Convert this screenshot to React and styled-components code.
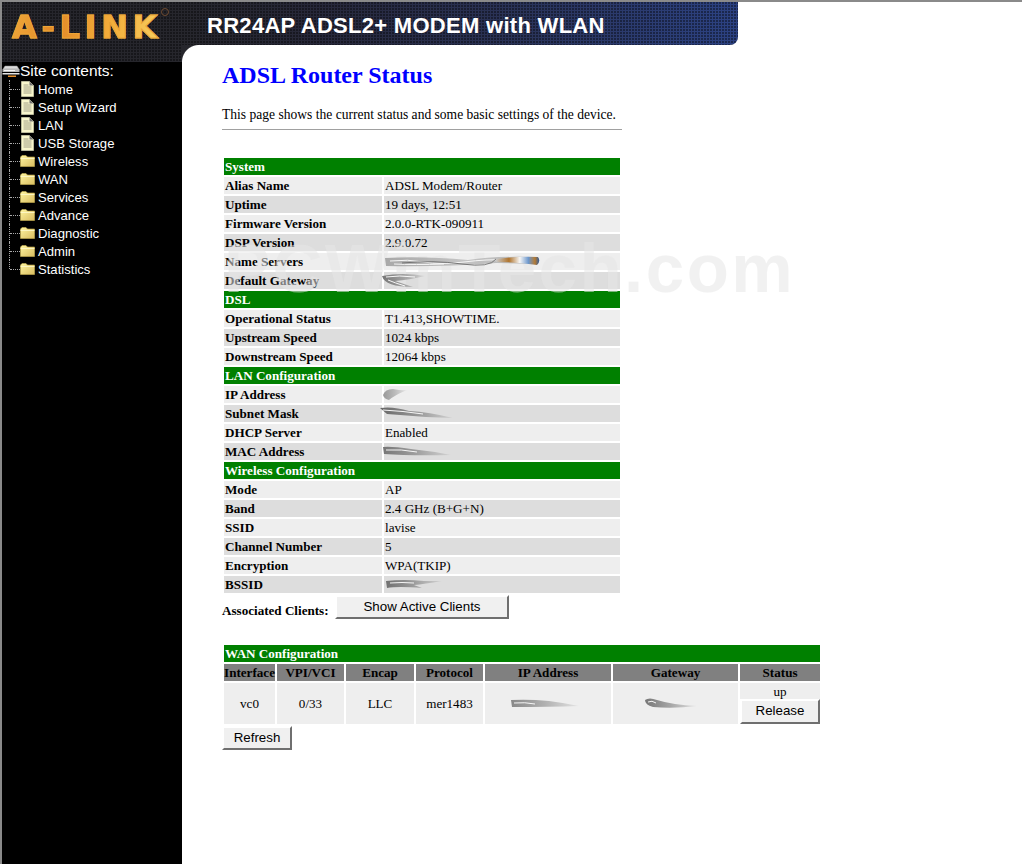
import React, { useId } from "react"
import styled, { createGlobalStyle } from "styled-components"

const GlobalStyle = createGlobalStyle`
  html, body {
    margin: 0;
    padding: 0;
    background: #fff;
  }
  body {
    font-family: "Liberation Serif", "Times New Roman", serif;
    font-size: 13.1px;
    color: #000;
  }
`

const dots = `
  radial-gradient(circle at 1px 1px, rgba(0, 0, 0, 0.4) 0.7px, transparent 1.1px)
`

const Page = styled.div`
  display: grid;
  grid-template-columns: 180px 1fr;
  min-height: 862px;
  border-top: 2px solid #8a8a8a;
  border-left: 2px solid #8a8a8a;
`

const LeftColumn = styled.div`
  display: flex;
  flex-direction: column;
  background: #000;
`

const LogoBlock = styled.div`
  position: relative;
  height: 60px;
  background-color: #26262c;
  background-image: ${dots};
  background-size: 3px 3px;
`

const LogoText = styled.span`
  display: block;
  padding: 5px 0 0 10px;
  font-family: "DejaVu Sans", sans-serif;
  font-weight: 700;
  font-size: 32px;
  line-height: 40px;
  letter-spacing: 4.7px;
  background: linear-gradient(100deg, #f2ae3e 0%, #e28a28 30%, #f3ad3a 60%, #f6cb5c 85%, #eaa638 100%);
  -webkit-background-clip: text;
  background-clip: text;
  color: transparent;
  -webkit-text-stroke: 1px #eca536;
`

const Registered = styled.span`
  position: absolute;
  left: 159px;
  top: 6px;
  width: 6px;
  height: 6px;
  border: 1px solid #6e4a30;
  border-radius: 50%;
`

const RightColumn = styled.div`
  display: flex;
  flex-direction: column;
  align-items: flex-start;
  min-width: 0;
`

const TitleBar = styled.div`
  box-sizing: border-box;
  width: 556px;
  height: 43px;
  padding: 11px 0 0 25px;
  border-bottom-right-radius: 8px;
  background-color: #26262c;
  background-image: ${dots}, linear-gradient(90deg, #26262c 0%, #27283a 25%, #2a3358 60%, #2c4283 100%);
  background-size: 3px 3px, 100% 100%;
  color: #fff;
  font-family: "Liberation Sans", Arial, sans-serif;
  font-weight: 700;
  font-size: 22px;
  line-height: 26px;
  letter-spacing: 0.29px;
  white-space: nowrap;
`

const Main = styled.main`
  position: relative;
  padding: 0 0 0 40px;
  &::before {
    content: "";
    position: absolute;
    left: 0;
    top: 0;
    width: 17px;
    height: 17px;
    background: radial-gradient(circle at 100% 100%, #fff 16.5px, #26262c 17.5px);
  }
`

const Heading = styled.h2`
  margin: 0;
  padding-top: 15px;
  color: #0000ff;
  font-size: 24px;
  line-height: 30px;
  font-weight: 700;
`

const Intro = styled.p`
  margin: 0;
  padding-top: 17px;
  width: 400px;
  font-size: 13.55px;
  line-height: 15px;
  white-space: nowrap;
`

const Rule = styled.hr`
  width: 400px;
  height: 0;
  margin: 7px 0 26px;
  border: 0;
  border-top: 1px solid #a0a0a0;
`

const Table = styled.table`
  border-collapse: separate;
  border-spacing: 2px;
  table-layout: fixed;
  width: ${(p) => p.$width}px;
  font-size: 13.1px;
  line-height: 15px;
`

const SectionCell = styled.td`
  height: 17px;
  padding: 1px;
  box-sizing: border-box;
  background: #008000;
  color: #fff;
  font-weight: 700;
`

const LabelCell = styled.td`
  height: 17px;
  padding: 1px;
  box-sizing: border-box;
  font-weight: 700;
  white-space: nowrap;
  background: ${(p) => (p.$alt ? "#dddddd" : "#eeeeee")};
`

const ValueCell = styled.td`
  position: relative;
  height: 17px;
  padding: 1px;
  box-sizing: border-box;
  white-space: nowrap;
  background: ${(p) => (p.$alt ? "#dddddd" : "#eeeeee")};
`

const HeadCell = styled.td`
  height: 17px;
  padding: 1px 0;
  box-sizing: border-box;
  background: #808080;
  font-weight: 700;
  text-align: center;
  white-space: nowrap;
`

const DataCell = styled.td`
  position: relative;
  height: 41px;
  padding: 0;
  box-sizing: border-box;
  background: #eeeeee;
  text-align: center;
  vertical-align: middle;
`

const StatusText = styled.div`
  height: 16px;
  line-height: 18px;
`

const ClientsRow = styled.div`
  display: flex;
  align-items: flex-end;
  width: 400px;
  margin-bottom: 24px;
`

const ClientsLabel = styled.span`
  width: 113px;
  font-weight: 700;
  line-height: 15px;
  padding-bottom: 1px;
  white-space: nowrap;
`

const Button = styled.button`
  display: block;
  box-sizing: border-box;
  width: ${(p) => p.$width}px;
  height: ${(p) => p.$height || 24}px;
  margin: 0;
  padding: 0 0 2px;
  background: #f0f0f0;
  border: 2px solid;
  border-color: #ffffff #6f6f6f #6f6f6f #ffffff;
  color: #000;
  font-family: "Liberation Sans", Arial, sans-serif;
  font-size: 13.33px;
`

const SmudgeSvg = styled.svg`
  position: absolute;
  z-index: 1;
  left: ${(p) => p.$x}px;
  top: ${(p) => p.$y}px;
  overflow: visible;
  pointer-events: none;
`

const Watermark = styled.div`
  position: absolute;
  left: 42px;
  top: 184px;
  color: rgba(230, 230, 230, 0.55);
  font-family: "Liberation Sans", Arial, sans-serif;
  font-weight: 700;
  font-size: 69px;
  line-height: 80px;
  letter-spacing: 2.5px;
  white-space: nowrap;
  pointer-events: none;
`

const Tree = styled.ul`
  position: relative;
  margin: 0;
  padding: 0;
  list-style: none;
  color: #fff;
  font-family: "Liberation Sans", Arial, sans-serif;
  font-size: 13.1px;
`

const TreeRoot = styled.li`
  display: flex;
  align-items: center;
  gap: 0;
  height: 18px;
  font-size: 15.5px;
`

const TreeItem = styled.li`
  position: relative;
  display: flex;
  align-items: center;
  gap: 3px;
  height: 18px;
  padding-left: 18px;
  &::before {
    content: "";
    position: absolute;
    left: 7px;
    top: 0;
    bottom: ${(p) => (p.$last ? "9px" : "0")};
    width: 10px;
    border-left: 1px dotted #aaa;
  }
  &::after {
    content: "";
    position: absolute;
    left: 8px;
    top: 9px;
    width: 10px;
    border-top: 1px dotted #aaa;
  }
`

const IconSlot = styled.span`
  display: flex;
  justify-content: center;
  width: 15px;
  margin-top: -1px;
`

const RootIcon = () => (
  <svg width="18" height="13" viewBox="0 0 18 13">
    <path d="M3 1h12l2 3H1z" fill="#dcdcdc" stroke="#8a8a8a" strokeWidth="0.5" />
    <rect x="0.500" y="4" width="17" height="3" fill="#b8b8b8" />
    <rect x="2" y="5" width="11" height="1" fill="#f4f4f4" />
    <rect x="0.500" y="8" width="17" height="1.500" fill="#e4e4e4" />
    <rect x="6" y="10.500" width="8" height="1.500" fill="#e8912c" />
  </svg>
)

const PageIcon = () => (
  <svg width="13" height="16" viewBox="0 0 13 16">
    <path d="M.5.5h8l4 4v11H.5z" fill="#f8f6cc" stroke="#c8c8a8" strokeWidth="0.8" />
    <path d="M8.500.5v4h4z" fill="#707070" />
    <path d="M2.500 4h5M2.500 6h8M2.500 8h8M2.500 10h8M2.500 12h8" stroke="#8d8d78" strokeWidth="0.8" />
  </svg>
)

const FolderIcon = () => (
  <svg width="15" height="12" viewBox="0 0 15 12">
    <defs>
      <linearGradient id="folderFill" x1="0" y1="0" x2="1" y2="1">
        <stop offset="0" stopColor="#fff5a0" />
        <stop offset="1" stopColor="#d8bc60" />
      </linearGradient>
    </defs>
    <path d="M.5 2 2 .5h4L7.500 2h7v9.500H.5z" fill="url(#folderFill)" stroke="#c8b050" strokeWidth="0.6" />
    <path d="M.5 3.500h14" stroke="#fffbd0" strokeWidth="0.8" />
  </svg>
)

// the smudges hide addresses in the original picture, drawn as tapered streaks
const Smudge = ({ x, y, w, h, d, lines, tone = "#8c8c8c", fade = 0.1, children }) => {
  const id = useId()
  return (
    <SmudgeSvg $x={x} $y={y} width={w} height={h} viewBox={`0 0 ${w} ${h}`}>
      <defs>
        <linearGradient id={id} x1="0" y1="0" x2="1" y2="0">
          <stop offset="0" stopColor={tone} />
          <stop offset="0.5" stopColor={tone} stopOpacity="0.6" />
          <stop offset="1" stopColor={tone} stopOpacity={fade} />
        </linearGradient>
      </defs>
      <path d={d} fill={`url(#${id})`} />
      {lines && <path d={lines} fill="none" stroke="#f6f6f6" strokeWidth="1" />}
      {children}
    </SmudgeSvg>
  )
}

const NameServerSmudge = () => (
  <Smudge
    x={0}
    y={3}
    w={156}
    h={12}
    tone="#a8a8a8"
    fade={0.8}
    d="M1 2 Q40 0 84 4 Q110 0 150 1 L154 8 L112 7 Q60 11 2 10 Z"
    lines="M6 5 Q24 3 40 6 T80 6 T120 4 M10 8 Q30 9 60 8"
  >
    <defs>
      <linearGradient id="nameServerEnd" x1="0" y1="0" x2="1" y2="0">
        <stop offset="0" stopColor="#c9c9c9" />
        <stop offset="0.3" stopColor="#b0742c" />
        <stop offset="0.55" stopColor="#f6f6f6" />
        <stop offset="0.75" stopColor="#6c97cc" />
        <stop offset="0.9" stopColor="#b57a32" />
        <stop offset="1" stopColor="#2f5c9c" />
      </linearGradient>
    </defs>
    <path d="M18 7 Q50 4 78 8 T112 3" fill="none" stroke="#555" strokeWidth="0.7" />
    <path d="M112 3 Q134 0 154 1 Q157 5 153 9 Q132 6 112 6 Z" fill="url(#nameServerEnd)" />
  </Smudge>
)

const GatewaySmudge = () => (
  <Smudge
    x={-3}
    y={1}
    w={48}
    h={16}
    tone="#777"
    d="M1 3 Q22 -1 44 3 Q28 7 14 8 L32 14 Q4 14 1 3 Z"
    lines="M5 4 Q18 2 34 4 M7 7 Q14 10 24 13"
  />
)

const system = [
  ["Alias Name", "ADSL Modem/Router"],
  ["Uptime", "19 days, 12:51"],
  ["Firmware Version", "2.0.0-RTK-090911"],
  ["DSP Version", "2.9.0.72"],
  ["Name Servers", <NameServerSmudge />],
  ["Default Gateway", <GatewaySmudge />],
]

const dsl = [
  ["Operational Status", "T1.413,SHOWTIME."],
  ["Upstream Speed", "1024 kbps"],
  ["Downstream Speed", "12064 kbps"],
]

const lan = [
  ["IP Address", <Smudge x={-3} y={1} w={42} h={15} tone="#999" d="M2 8 Q4 2 12 2 Q22 4 26 3 Q14 8 8 13 Q3 12 2 8 Z" />],
  ["Subnet Mask", <Smudge x={-5} y={1} w={76} h={15} tone="#666" d="M1 2 Q14 0 30 5 Q50 6 74 12 Q40 11 8 8 Z" lines="M4 4 Q24 5 44 8" />],
  ["DHCP Server", "Enabled"],
  ["MAC Address", <Smudge x={-3} y={2} w={72} h={14} tone="#777" d="M2 2 Q10 1 30 4 Q50 6 70 10 Q30 11 3 9 Z" lines="M5 5 Q20 4 36 7" />],
]

const wireless = [
  ["Mode", "AP"],
  ["Band", "2.4 GHz (B+G+N)"],
  ["SSID", "lavise"],
  ["Channel Number", "5"],
  ["Encryption", "WPA(TKIP)"],
  ["BSSID", <Smudge x={0} y={2} w={60} h={13} tone="#707070" d="M2 3 Q20 1 40 3 Q50 3 58 3 Q40 6 30 7 L38 10 Q14 8 3 10 Z" lines="M6 5 Q18 4 30 5" />],
]

const sections = [
  { title: "System", rows: system },
  { title: "DSL", rows: dsl },
  { title: "LAN Configuration", rows: lan },
  { title: "Wireless Configuration", rows: wireless },
]

const pages = ["Home", "Setup Wizard", "LAN", "USB Storage"]
const folders = ["Wireless", "WAN", "Services", "Advance", "Diagnostic", "Admin", "Statistics"]

const wanColumns = [
  ["Interface", 51],
  ["VPI/VCI", 67],
  ["Encap", 68],
  ["Protocol", 67],
  ["IP Address", 126],
  ["Gateway", 125],
  ["Status", 80],
]

export default function App() {
  return (
    <>
      <GlobalStyle />
      <Page>
        <LeftColumn>
          <LogoBlock>
            <LogoText>A-LINK</LogoText>
            <Registered />
          </LogoBlock>
          <Tree>
            <TreeRoot>
              <RootIcon />
              Site contents:
            </TreeRoot>
            {pages.map((name) => (
              <TreeItem key={name}>
                <IconSlot>
                  <PageIcon />
                </IconSlot>
                <span>{name}</span>
              </TreeItem>
            ))}
            {folders.map((name, i) => (
              <TreeItem key={name} $last={i === folders.length - 1}>
                <IconSlot>
                  <FolderIcon />
                </IconSlot>
                <span>{name}</span>
              </TreeItem>
            ))}
          </Tree>
        </LeftColumn>
        <RightColumn>
          <TitleBar>RR24AP ADSL2+ MODEM with WLAN</TitleBar>
          <Main>
            <Heading>ADSL Router Status</Heading>
            <Intro>This page shows the current status and some basic settings of the device.</Intro>
            <Rule />
            <Table $width={400}>
              <colgroup>
                <col style={{ width: 158 }} />
                <col />
              </colgroup>
              <tbody>
                {sections.map((section) => (
                  <React.Fragment key={section.title}>
                    <tr>
                      <SectionCell colSpan={2}>{section.title}</SectionCell>
                    </tr>
                    {section.rows.map(([label, value], i) => (
                      <tr key={label}>
                        <LabelCell $alt={i % 2 === 1}>{label}</LabelCell>
                        <ValueCell $alt={i % 2 === 1}>{value}</ValueCell>
                      </tr>
                    ))}
                  </React.Fragment>
                ))}
              </tbody>
            </Table>
            <ClientsRow>
              <ClientsLabel>Associated Clients:</ClientsLabel>
              <Button $width={174}>Show Active Clients</Button>
            </ClientsRow>
            <Table $width={600}>
              <colgroup>
                {wanColumns.map(([name, width]) => (
                  <col key={name} style={{ width }} />
                ))}
              </colgroup>
              <tbody>
                <tr>
                  <SectionCell colSpan={7}>WAN Configuration</SectionCell>
                </tr>
                <tr>
                  {wanColumns.map(([name]) => (
                    <HeadCell key={name}>{name}</HeadCell>
                  ))}
                </tr>
                <tr>
                  <DataCell>vc0</DataCell>
                  <DataCell>0/33</DataCell>
                  <DataCell>LLC</DataCell>
                  <DataCell>mer1483</DataCell>
                  <DataCell>
                    <Smudge x={24} y={15} w={72} h={12} tone="#888" d="M2 2 Q20 1 40 3 Q56 5 70 8 Q40 9 3 9 Z" lines="M5 5 Q16 4 26 6" />
                  </DataCell>
                  <DataCell>
                    <Smudge x={30} y={14} w={56} h={13} tone="#777" d="M2 3 Q6 0 14 3 Q30 8 54 9 Q30 12 10 10 Q2 8 2 3 Z" lines="M5 5 Q9 3 13 6" />
                  </DataCell>
                  <DataCell>
                    <StatusText>up</StatusText>
                    <Button $width={80} $height={25}>Release</Button>
                  </DataCell>
                </tr>
              </tbody>
            </Table>
            <Button $width={70}>Refresh</Button>
            <Watermark>PCWinTech.com</Watermark>
          </Main>
        </RightColumn>
      </Page>
    </>
  )
}
